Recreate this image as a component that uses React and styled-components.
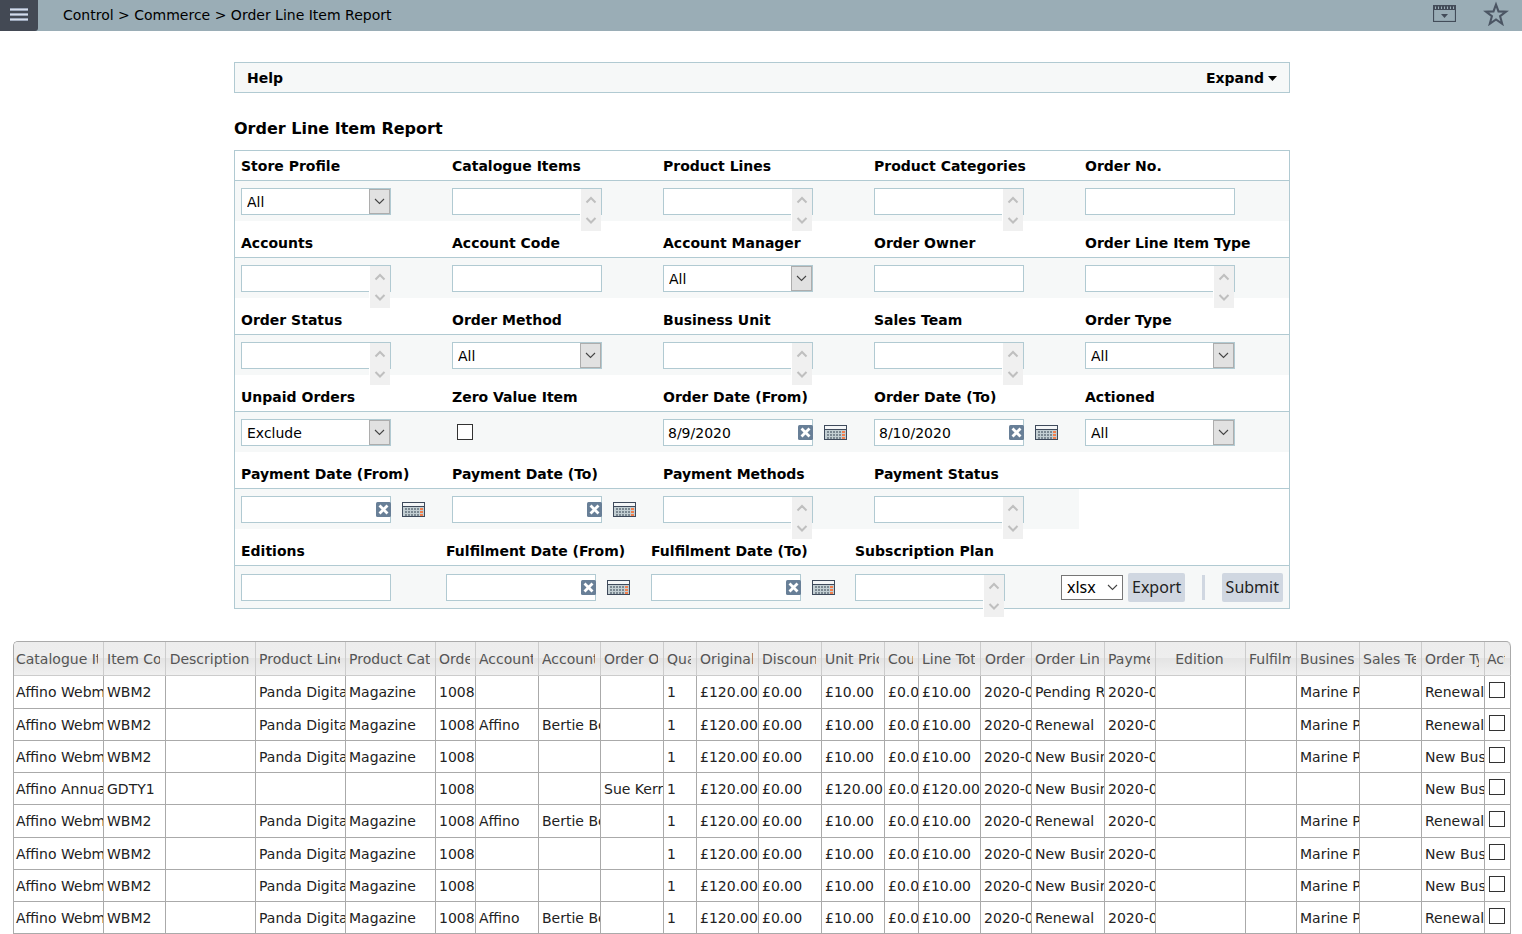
import React from 'react'
import styled, { createGlobalStyle } from 'styled-components'

const GlobalStyle = createGlobalStyle`
* {
  box-sizing: border-box;
}
body {
  margin: 0;
  background: #fff;
  color: #000;
  font-family: Verdana, "DejaVu Sans", sans-serif;
  font-size: 14px;
}
button, input, select {
  font-family: inherit;
  font-size: inherit;
  color: inherit;
  margin: 0;
}
`

const filterRows = [
  [
    { id: 'storeProfile', label: 'Store Profile', type: 'select', value: 'All' },
    { id: 'catalogueItems', label: 'Catalogue Items', type: 'list' },
    { id: 'productLines', label: 'Product Lines', type: 'list' },
    { id: 'productCategories', label: 'Product Categories', type: 'list' },
    { id: 'orderNo', label: 'Order No.', type: 'text' },
  ],
  [
    { id: 'accounts', label: 'Accounts', type: 'list' },
    { id: 'accountCode', label: 'Account Code', type: 'text' },
    { id: 'accountManager', label: 'Account Manager', type: 'select', value: 'All' },
    { id: 'orderOwner', label: 'Order Owner', type: 'text' },
    { id: 'lineItemType', label: 'Order Line Item Type', type: 'list' },
  ],
  [
    { id: 'orderStatus', label: 'Order Status', type: 'list' },
    { id: 'orderMethod', label: 'Order Method', type: 'select', value: 'All' },
    { id: 'businessUnit', label: 'Business Unit', type: 'list' },
    { id: 'salesTeam', label: 'Sales Team', type: 'list' },
    { id: 'orderType', label: 'Order Type', type: 'select', value: 'All' },
  ],
  [
    { id: 'unpaidOrders', label: 'Unpaid Orders', type: 'select', value: 'Exclude' },
    { id: 'zeroValue', label: 'Zero Value Item', type: 'checkbox' },
    { id: 'orderFrom', label: 'Order Date (From)', type: 'date', value: '8/9/2020' },
    { id: 'orderTo', label: 'Order Date (To)', type: 'date', value: '8/10/2020' },
    { id: 'actioned', label: 'Actioned', type: 'select', value: 'All' },
  ],
  [
    { id: 'paymentFrom', label: 'Payment Date (From)', type: 'date' },
    { id: 'paymentTo', label: 'Payment Date (To)', type: 'date' },
    { id: 'paymentMethods', label: 'Payment Methods', type: 'list' },
    { id: 'paymentStatus', label: 'Payment Status', type: 'list' },
  ],
]

const lastRow = [
  { id: 'editions', label: 'Editions', type: 'text' },
  { id: 'fulfilmentFrom', label: 'Fulfilment Date (From)', type: 'date' },
  { id: 'fulfilmentTo', label: 'Fulfilment Date (To)', type: 'date' },
  { id: 'subscriptionPlan', label: 'Subscription Plan', type: 'list' },
]

const columns = [
  ['Catalogue Item', 90],
  ['Item Code', 62],
  ['Description', 90],
  ['Product Line', 90],
  ['Product Cat', 90],
  ['Order', 40],
  ['Account', 63],
  ['Account ', 62],
  ['Order Owner', 63],
  ['Quantity', 33],
  ['Original', 62],
  ['Discount', 63],
  ['Unit Price', 63],
  ['Coupon', 34],
  ['Line Total', 62],
  ['Order ', 51],
  ['Order Line', 73],
  ['Payment', 51],
  ['Edition', 90],
  ['Fulfilment', 51],
  ['Business', 63],
  ['Sales Team', 62],
  ['Order Type', 63],
  ['Act', 26],
]

const webmag = { item: 'Affino Webmag', code: 'WBM2', line: 'Panda Digital', cat: 'Magazine', price: '£10.00', unit: 'Marine P' }
const annual = { item: 'Affino Annual', code: 'GDTY1', price: '£120.00' }

const orders = [
  { ...webmag, lineType: 'Pending R', type: 'Renewal' },
  { ...webmag, account: 'Affino', contact: 'Bertie Bell', lineType: 'Renewal', type: 'Renewal' },
  { ...webmag, lineType: 'New Business', type: 'New Business' },
  { ...annual, owner: 'Sue Kerry', lineType: 'New Business', type: 'New Business' },
  { ...webmag, account: 'Affino', contact: 'Bertie Bell', lineType: 'Renewal', type: 'Renewal' },
  { ...webmag, lineType: 'New Business', type: 'New Business' },
  { ...webmag, lineType: 'New Business', type: 'New Business' },
  { ...webmag, account: 'Affino', contact: 'Bertie Bell', lineType: 'Renewal', type: 'Renewal' },
]

const toCells = (o) => [
  o.item, o.code, '', o.line, o.cat, '1008', o.account, o.contact, o.owner, '1',
  '£120.00', '£0.00', o.price, '£0.00', o.price, '2020-08', o.lineType, '2020-08',
  '', '', o.unit, '', o.type,
]

const Chevron = () => (
  <svg width="11" height="7" viewBox="0 0 11 7" fill="none" stroke="#444" strokeWidth="1.1">
    <path d="M1 1l4.500 4.500L10 1" />
  </svg>
)

const CalendarIcon = () => (
  <svg width="23" height="15" viewBox="0 0 23 15">
    <rect x="0.500" y="0.500" width="22" height="14" fill="#c3cfd3" stroke="#3e4a5b" />
    <rect x="1" y="1" width="21" height="3" fill="#f4f6f7" />
    <rect x="1" y="4" width="21" height="1" fill="#3e4a5b" />
    <g fill="#7c8992">
      {[6, 9, 12].map((y) => [3, 6, 9, 12, 15].map((x) => <rect key={`${x}-${y}`} x={x} y={y} width="2" height="2" />))}
    </g>
    <g fill="#f0804f">
      {[6, 9, 12].map((y) => <rect key={y} x="18" y={y} width="3" height="2" />)}
    </g>
  </svg>
)

const Field = ({ id, type, value }) => {
  if (type === 'select') {
    return (
      <SelectBox>
        <Select id={id} defaultValue={value}>
          <option>{value}</option>
        </Select>
        <Arrow><Chevron /></Arrow>
      </SelectBox>
    )
  }
  if (type === 'list') {
    return (
      <ListBox>
        <List id={id} multiple />
        <Scroller viewBox="0 0 21 42" fill="none" stroke="#bfbfbf" strokeWidth="2">
          <rect width="1" height="42" fill="#fff" stroke="none" />
          <rect x="1" width="20" height="42" fill="#f0f0f0" stroke="none" />
          <path d="M6.500 13.500L11 9l4.500 4.500M6.500 29l4.500 4.500 4.500-4.500" />
        </Scroller>
      </ListBox>
    )
  }
  if (type === 'date') {
    return (
      <DateBox>
        <DateInput>
          <TextInput id={id} type="text" defaultValue={value} />
          <ClearButton type="button" aria-label="Clear date">
            <svg width="15" height="15" viewBox="0 0 15 15">
              <rect width="15" height="15" rx="1.500" fill="#687f97" />
              <path d="M4.500 4.500l6 6M10.500 4.500l-6 6" stroke="#fff" strokeWidth="2.800" strokeLinecap="square" />
            </svg>
          </ClearButton>
        </DateInput>
        <IconButton type="button" aria-label="Pick a date"><CalendarIcon /></IconButton>
      </DateBox>
    )
  }
  if (type === 'checkbox') {
    return <FilterCheck id={id} type="checkbox" />
  }
  return <TextInput id={id} type="text" />
}

const App = () => {
  return (
    <>
      <GlobalStyle />
      <TopBar>
        <MenuButton type="button" aria-label="Menu">
          <svg width="18" height="13" viewBox="0 0 18 13">
            {[0, 5, 10].map((y) => (
              <g key={y}>
                <rect y={y} width="18" height="3" fill="#9aa5b8" />
                <rect y={y + 1} width="18" height="1" fill="#d5dcea" />
              </g>
            ))}
          </svg>
        </MenuButton>
        <Crumbs>Control &gt; Commerce &gt; Order Line Item Report</Crumbs>
        <TopIcons>
          <IconButton type="button" aria-label="Show panel">
            <svg width="23" height="17" viewBox="0 0 23 17">
              <rect x="0.500" y="0.500" width="22" height="16" fill="none" stroke="#434c59" strokeWidth="1.200" />
              <rect x="0" y="0" width="23" height="5" fill="#434c59" />
              <path d="M2.500 1.500v2.500M5.500 1.500v2.500M8.500 1.500v2.500M11.500 1.500v2.500M14.500 1.500v2.500M17.500 1.500v2.500M20.500 1.500v2.500" stroke="#9aadb6" />
              <path d="M8 9h7l-3.500 4z" fill="#434c59" />
            </svg>
          </IconButton>
          <IconButton type="button" aria-label="Add to favourites">
            <svg width="26" height="25" viewBox="0 0 26 25">
              <path d="M13 3.500l2.500 6.900 7.500.2-5.900 4.600 2.100 7.600L13 18.500l-6.200 4.300 2.100-7.600L3 10.600l7.500-.2z" fill="none" stroke="#4b5563" strokeWidth="2.100" />
            </svg>
          </IconButton>
        </TopIcons>
      </TopBar>
      <Main>
        <Container>
          <HelpBar>
            <span>Help</span>
            <ExpandButton type="button">
              Expand
              <svg width="9" height="6" viewBox="0 0 9 6"><path d="M0 1h9L4.500 6z" /></svg>
            </ExpandButton>
          </HelpBar>
          <Title>Order Line Item Report</Title>
          <Filters onSubmit={(e) => e.preventDefault()}>
            {filterRows.map((row, i) => (
              <React.Fragment key={i}>
                <LabelRow $first={i === 0}>
                  {row.map((f) => <Label key={f.id} htmlFor={f.id}>{f.label}</Label>)}
                </LabelRow>
                <FieldRow>
                  {row.map((f) => <FieldCell key={f.id}><Field {...f} /></FieldCell>)}
                </FieldRow>
              </React.Fragment>
            ))}
            <LabelRow $last>
              {lastRow.map((f) => <Label key={f.id} htmlFor={f.id}>{f.label}</Label>)}
            </LabelRow>
            <FieldRow $last>
              {lastRow.map((f) => <FieldCell key={f.id} $last><Field {...f} /></FieldCell>)}
              <Actions>
                <FormatBox>
                  <FormatSelect aria-label="Export format" defaultValue="xlsx">
                    <option>xlsx</option>
                  </FormatSelect>
                  <FormatArrow><Chevron /></FormatArrow>
                </FormatBox>
                <ActionButton type="button">Export</ActionButton>
                <Divider />
                <ActionButton type="submit">Submit</ActionButton>
              </Actions>
            </FieldRow>
          </Filters>
        </Container>
        <Table>
          <colgroup>
            {columns.map(([name, width]) => <Col key={name} $width={width} />)}
          </colgroup>
          <thead>
            <tr>
              {columns.map(([name]) => <Th key={name}><Clip>{name}</Clip></Th>)}
            </tr>
          </thead>
          <tbody>
            {orders.map((order, i) => (
              <Tr key={i}>
                {toCells(order).map((text, j) => <Td key={j}>{text}</Td>)}
                <CheckCell>
                  <Checkbox type="checkbox" aria-label={`Actioned, row ${i + 1}`} />
                </CheckCell>
              </Tr>
            ))}
          </tbody>
        </Table>
      </Main>
    </>
  )
}

const TopBar = styled.header`
display: flex;
align-items: center;
height: 31px;
background: #9aadb6;
`

const MenuButton = styled.button`
display: flex;
align-items: center;
justify-content: center;
width: 38px;
height: 31px;
padding: 0 0 2px;
border: 0;
border-radius: 0 0 3px 0;
background: #434954;
`

const Crumbs = styled.nav`
flex: 1;
padding: 0 0 2px 25px;
line-height: 28px;
white-space: nowrap;
`

const TopIcons = styled.div`
display: flex;
align-items: center;
gap: 27px;
padding: 0 13px 4px 0;
`

const IconButton = styled.button`
display: flex;
padding: 0;
border: 0;
background: none;
`

const Main = styled.main`
padding: 31px 11px 0 13px;
`

const Container = styled.div`
max-width: 1056px;
margin: 0 auto 32px;
`

const HelpBar = styled.div`
display: flex;
justify-content: space-between;
align-items: center;
height: 31px;
padding: 0 12px;
border: 1px solid #b1cad2;
background: #f6f8f8;
font-weight: bold;
`

const ExpandButton = styled.button`
display: flex;
align-items: center;
gap: 4px;
padding: 0;
border: 0;
background: none;
font-weight: bold;
`

const Title = styled.h1`
margin: 26px 0 11px;
font-size: 16px;
line-height: 20px;
`

const Filters = styled.form`
border: 1px solid #b1cad2;
`

const rowColumns = (p) => (p.$last ? '205fr 205fr 204fr 206fr 234fr' : '211fr 211fr 211fr 211fr 210fr')

const LabelRow = styled.div`
display: grid;
grid-template-columns: ${rowColumns};
padding-top: ${(p) => (p.$first ? 2 : 9)}px;
border-bottom: 1px solid #b1cad2;
`

const Label = styled.label`
padding-left: 6px;
line-height: 27px;
font-weight: bold;
white-space: nowrap;
`

const FieldRow = styled.div`
display: grid;
grid-template-columns: ${rowColumns};
`

const FieldCell = styled.div`
height: ${(p) => (p.$last ? 42 : 40)}px;
padding: ${(p) => (p.$last ? 8 : 7)}px 0 0 6px;
background: #f6f8f8;
`

const TextInput = styled.input`
display: block;
width: 150px;
height: 27px;
padding: 0 4px;
border: 1px solid #b1cad2;
background: #fff;
`

const SelectBox = styled.div`
position: relative;
width: 150px;
`

const Select = styled.select`
display: block;
appearance: none;
width: 100%;
height: 27px;
padding: 0 24px 0 5px;
border: 1px solid #b1cad2;
border-radius: 0;
background: #fff;
`

const Arrow = styled.span`
position: absolute;
top: 1px;
right: 1px;
display: flex;
align-items: center;
justify-content: center;
width: 21px;
height: 25px;
border: 1px solid #adadad;
background: #e1e1e1;
pointer-events: none;
`

const ListBox = styled.div`
position: relative;
width: 150px;
`

const List = styled.select`
display: block;
appearance: none;
width: 100%;
height: 27px;
padding: 0;
border: 1px solid #b1cad2;
border-radius: 0;
background: #fff;
overflow: hidden;
`

/* the scroll arrows hang out below the short list box */
const Scroller = styled.svg`
position: absolute;
top: 1px;
right: 1px;
width: 21px;
height: 42px;
`

const DateBox = styled.div`
display: flex;
align-items: center;
gap: 11px;
`

const DateInput = styled.div`
position: relative;
`

const ClearButton = styled.button`
position: absolute;
top: 6px;
right: 0;
display: flex;
padding: 0;
border: 0;
background: none;
`

const Checkbox = styled.input`
display: block;
appearance: none;
width: 16px;
height: 16px;
border: 1px solid #333;
background: #fff;
&:checked {
  background: #687f97;
}
`

const FilterCheck = styled(Checkbox)`
margin: 5px 0 0 5px;
`

const Actions = styled.div`
display: flex;
align-items: center;
padding: 0 6px;
background: #f6f8f8;
font-family: "Noto Sans", sans-serif;
font-size: 16px;
`

const FormatBox = styled.div`
position: relative;
margin-right: 5px;
`

const FormatSelect = styled.select`
display: block;
appearance: none;
width: 62px;
height: 25px;
padding: 0 5px;
border: 1px solid #767676;
border-radius: 0;
background: #fff;
`

const FormatArrow = styled.span`
position: absolute;
top: 0;
right: 5px;
display: flex;
align-items: center;
height: 25px;
pointer-events: none;
`

const ActionButton = styled.button`
height: 29px;
padding: 0 4px;
border: 0;
border-radius: 2px;
background: #d0d7e1;
color: #222;
`

const Divider = styled.span`
width: 3px;
height: 25px;
margin: 0 auto;
background: #d0d7e1;
`

const Table = styled.table`
width: 100%;
table-layout: fixed;
border-collapse: separate;
border-spacing: 0;
border-top: 1px solid #aaa;
border-left: 1px solid #aaa;
border-radius: 5px 5px 0 0;
color: #222;
`

const Col = styled.col`
width: ${(p) => p.$width}px;
`

const Th = styled.th`
height: 34px;
padding: 0 5px 0 3px;
border-right: 1px solid #ccc;
border-bottom: 1px solid #ccc;
background: linear-gradient(#ededed 0, #eee 50%, #e4e4e4 50%, #f0f0f0 100%);
color: #555;
font-weight: normal;
&:first-child {
  padding-left: 2px;
  border-top-left-radius: 4px;
}
&:last-child {
  padding-left: 2px;
  border-top-right-radius: 5px;
  border-right-color: #aaa;
}
`

const Clip = styled.div`
overflow: hidden;
white-space: nowrap;
`

const Td = styled.td`
padding: 0 0 0 3px;
border-right: 1px solid #aaa;
border-bottom: 1px solid #aaa;
overflow: hidden;
white-space: nowrap;
&:first-child {
  padding-left: 2px;
}
`

const CheckCell = styled(Td)`
padding: 6px 0 0 4px;
vertical-align: top;
`

const Tr = styled.tr`
height: 32px;
&:nth-child(4n + 1) {
  height: 33px;
}
`

export default App
